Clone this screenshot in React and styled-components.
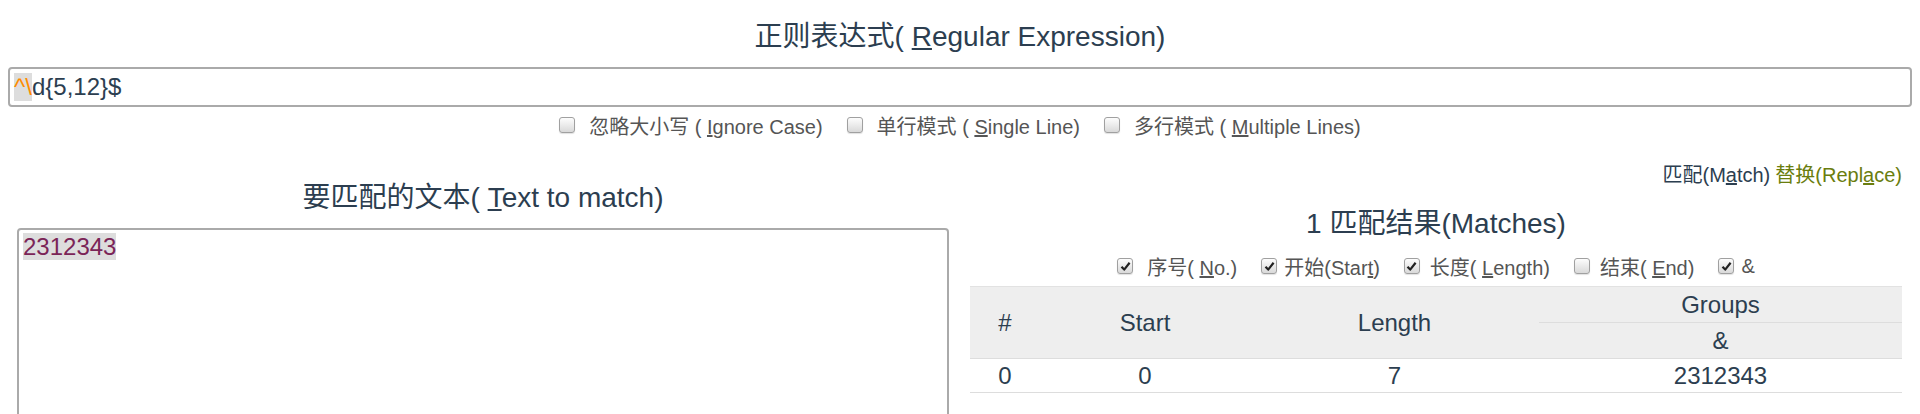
import React from "react";
import styled, { createGlobalStyle } from "styled-components";

const GlobalStyle = createGlobalStyle`
  body {
    margin: 0;
    padding: 0 8px;
    background: #fff;
    color: #2c3e50;
    font-family: "Liberation Sans", Arial, "Noto Sans CJK SC", sans-serif;
  }
`;

const Page = styled.div`
  width: 100%;
`;

const Heading = styled.h3`
  margin: ${(p) => p.$top || 0}px 0 ${(p) => p.$bottom || 0}px;
  font-size: 28px;
  font-weight: normal;
  line-height: 34px;
  text-align: center;
  color: #2c3e50;
`;

const RegexBox = styled.div`
  height: 40px;
  box-sizing: border-box;
  border: 2px solid #aaa;
  border-radius: 4px;
  padding: 0 4px;
  display: flex;
  align-items: center;
  font-size: 24px;
  color: #2c3e50;
`;

const Mark = styled.span`
  background: #ddd;
  color: ${(p) => p.$color || "inherit"};
`;

const OptionRow = styled.div`
  display: flex;
  justify-content: center;
  align-items: center;
  gap: ${(p) => p.$gap}px;
  margin-top: ${(p) => p.$top || 0}px;
  height: 28px;
  font-size: 20px;
  color: #555;
`;

const Option = styled.label`
  display: inline-flex;
  align-items: center;
  gap: ${(p) => p.$space}px;
  white-space: pre;
`;

const Box = styled.span`
  width: 16px;
  height: 16px;
  box-sizing: border-box;
  border: 1px solid #a0a0a0;
  border-radius: 3px;
  background: linear-gradient(#fdfdfd, #d9d9d9);
  box-shadow: 0 1px 1px rgba(0, 0, 0, 0.12);
  display: inline-flex;
  align-items: center;
  justify-content: center;
`;

const Check = ({ on }) => (
  <Box>
    {on && (
      <svg width="11" height="11" viewBox="0 0 11 11">
        <path d="M1.5 5.8 L4.2 8.6 L9.6 1.8" fill="none" stroke="#222" strokeWidth="2.2" strokeLinejoin="round" />
      </svg>
    )}
  </Box>
);

const Columns = styled.div`
  display: grid;
  grid-template-columns: 1fr 1fr;
`;

const LeftCol = styled.div`
  padding: 42px 11px 0 9px;
`;

const RightCol = styled.div`
  padding: 24px 10px 0;
`;

const TextBox = styled.div`
  height: 260px;
  box-sizing: border-box;
  border: 2px solid #aaa;
  border-radius: 4px;
  padding: 3px 4px;
  font-size: 24px;
  line-height: 28px;
  color: #7b2457;
`;

const ModeLinks = styled.div`
  text-align: right;
  font-size: 20px;
  line-height: 24px;
  margin-bottom: 20px;
`;

const ModeLink = styled.span`
  color: ${(p) => (p.$active ? "#2c3e50" : "#6a7d0e")};
  margin-left: ${(p) => (p.$gap ? 5 : 0)}px;
`;

const Table = styled.table`
  width: 100%;
  margin-top: 6px;
  border-collapse: collapse;
  table-layout: fixed;
  font-size: 24px;
  color: #2c3e50;
`;

const HeadCell = styled.th`
  background: #eee;
  font-weight: normal;
  text-align: center;
  height: 35px;
  padding: 0;
  border-top: 1px solid #e2e2e2;
  border-bottom: 1px solid #ddd;
`;

const Cell = styled.td`
  text-align: center;
  height: 33px;
  padding: 0;
  border-bottom: 1px solid #ddd;
`;

const matches = [{ index: 0, start: 0, length: 7, group: "2312343" }];

export default function App() {
  return (
    <Page>
      <GlobalStyle />
      <Heading $top={20} $bottom={13}>
        正则表达式( <u>R</u>egular Expression)
      </Heading>
      <RegexBox>
        <Mark $color="#ff8c00">^\</Mark>
        <span>d{"{5,12}"}$</span>
      </RegexBox>
      <OptionRow $gap={24} $top={4}>
        <Option $space={14}>
          <Check />
          <span>忽略大小写 ( <u>I</u>gnore Case)</span>
        </Option>
        <Option $space={14}>
          <Check />
          <span>单行模式 ( <u>S</u>ingle Line)</span>
        </Option>
        <Option $space={14}>
          <Check />
          <span>多行模式 ( <u>M</u>ultiple Lines)</span>
        </Option>
      </OptionRow>
      <Columns>
        <LeftCol>
          <Heading $bottom={13}>
            要匹配的文本( <u>T</u>ext to match)
          </Heading>
          <TextBox>
            <Mark>2312343</Mark>
          </TextBox>
        </LeftCol>
        <RightCol>
          <ModeLinks>
            <ModeLink $active>匹配(M<u>a</u>tch)</ModeLink>
            <ModeLink $gap>替换(Repl<u>a</u>ce)</ModeLink>
          </ModeLinks>
          <Heading>1 匹配结果(Matches)</Heading>
          <OptionRow $gap={24} $top={11}>
            <Option $space={14}>
              <Check on />
              <span>序号( <u>N</u>o.)</span>
            </Option>
            <Option $space={7}>
              <Check on />
              <span>开始(Star<u>t</u>)</span>
            </Option>
            <Option $space={10}>
              <Check on />
              <span>长度( <u>L</u>ength)</span>
            </Option>
            <Option $space={10}>
              <Check />
              <span>结束( <u>E</u>nd)</span>
            </Option>
            <Option $space={7}>
              <Check on />
              <span>&amp;</span>
            </Option>
          </OptionRow>
          <Table>
            <colgroup>
              <col style={{ width: 70 }} />
              <col style={{ width: 210 }} />
              <col style={{ width: 289 }} />
              <col style={{ width: 363 }} />
            </colgroup>
            <thead>
              <tr>
                <HeadCell rowSpan={2}>#</HeadCell>
                <HeadCell rowSpan={2}>Start</HeadCell>
                <HeadCell rowSpan={2}>Length</HeadCell>
                <HeadCell>Groups</HeadCell>
              </tr>
              <tr>
                <HeadCell>&amp;</HeadCell>
              </tr>
            </thead>
            <tbody>
              {matches.map((m) => (
                <tr key={m.index}>
                  <Cell>{m.index}</Cell>
                  <Cell>{m.start}</Cell>
                  <Cell>{m.length}</Cell>
                  <Cell>{m.group}</Cell>
                </tr>
              ))}
            </tbody>
          </Table>
        </RightCol>
      </Columns>
    </Page>
  );
}
